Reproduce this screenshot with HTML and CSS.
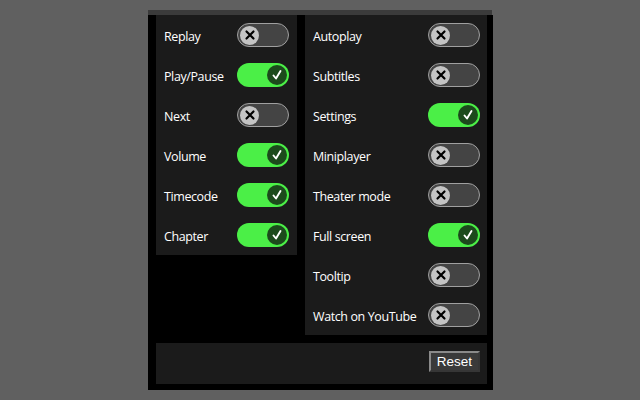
FILE: index.html
```html
<!DOCTYPE html>
<html>
<head>
<meta charset="utf-8">
<link rel="stylesheet" href="styles.css">
</head>
<body>
<div class="frame">
  <div class="box">
    <div class="cols">
      <div class="panel panel-left">
        <div class="row"><span class="label">Replay</span><span class="tog off"><span class="knob"><svg viewBox="0 0 18 18"><path d="M5.5 5.5 L12.5 12.5 M12.5 5.5 L5.5 12.5"/></svg></span></span></div>
        <div class="row"><span class="label">Play/Pause</span><span class="tog on"><span class="knob"><svg viewBox="0 0 18 18"><path d="M5.5 9.5 L8 12.5 L12.5 5"/></svg></span></span></div>
        <div class="row"><span class="label">Next</span><span class="tog off"><span class="knob"><svg viewBox="0 0 18 18"><path d="M5.5 5.5 L12.5 12.5 M12.5 5.5 L5.5 12.5"/></svg></span></span></div>
        <div class="row"><span class="label">Volume</span><span class="tog on"><span class="knob"><svg viewBox="0 0 18 18"><path d="M5.5 9.5 L8 12.5 L12.5 5"/></svg></span></span></div>
        <div class="row"><span class="label">Timecode</span><span class="tog on"><span class="knob"><svg viewBox="0 0 18 18"><path d="M5.5 9.5 L8 12.5 L12.5 5"/></svg></span></span></div>
        <div class="row"><span class="label">Chapter</span><span class="tog on"><span class="knob"><svg viewBox="0 0 18 18"><path d="M5.5 9.5 L8 12.5 L12.5 5"/></svg></span></span></div>
      </div>
      <div class="panel panel-right">
        <div class="row"><span class="label">Autoplay</span><span class="tog off"><span class="knob"><svg viewBox="0 0 18 18"><path d="M5.5 5.5 L12.5 12.5 M12.5 5.5 L5.5 12.5"/></svg></span></span></div>
        <div class="row"><span class="label">Subtitles</span><span class="tog off"><span class="knob"><svg viewBox="0 0 18 18"><path d="M5.5 5.5 L12.5 12.5 M12.5 5.5 L5.5 12.5"/></svg></span></span></div>
        <div class="row"><span class="label">Settings</span><span class="tog on"><span class="knob"><svg viewBox="0 0 18 18"><path d="M5.5 9.5 L8 12.5 L12.5 5"/></svg></span></span></div>
        <div class="row"><span class="label">Miniplayer</span><span class="tog off"><span class="knob"><svg viewBox="0 0 18 18"><path d="M5.5 5.5 L12.5 12.5 M12.5 5.5 L5.5 12.5"/></svg></span></span></div>
        <div class="row"><span class="label">Theater mode</span><span class="tog off"><span class="knob"><svg viewBox="0 0 18 18"><path d="M5.5 5.5 L12.5 12.5 M12.5 5.5 L5.5 12.5"/></svg></span></span></div>
        <div class="row"><span class="label">Full screen</span><span class="tog on"><span class="knob"><svg viewBox="0 0 18 18"><path d="M5.5 9.5 L8 12.5 L12.5 5"/></svg></span></span></div>
        <div class="row"><span class="label">Tooltip</span><span class="tog off"><span class="knob"><svg viewBox="0 0 18 18"><path d="M5.5 5.5 L12.5 12.5 M12.5 5.5 L5.5 12.5"/></svg></span></span></div>
        <div class="row"><span class="label">Watch on YouTube</span><span class="tog off"><span class="knob"><svg viewBox="0 0 18 18"><path d="M5.5 5.5 L12.5 12.5 M12.5 5.5 L5.5 12.5"/></svg></span></span></div>
      </div>
    </div>
    <div class="footer">
      <button class="reset">Reset</button>
    </div>
  </div>
</div>
</body>
</html>
```
FILE: styles.css
```css
html, body {
  margin: 0;
  padding: 0;
  background: #606060;
  height: 400px;
  overflow: hidden;
}
.frame {
  margin: 10px 0 0 148px;
  width: 344px;
  border-top: 5px solid #3b3b3b;
}
.box {
  width: 334px;
  background: #000;
  padding: 0 3px 6px 8px;
  height: 369px;
  display: flex;
  flex-direction: column;
}
.cols {
  display: flex;
  align-items: flex-start;
  gap: 8px;
}
.panel {
  background: #1b1b1b;
  display: flex;
  flex-direction: column;
}
.panel-left { width: 141px; }
.panel-right { width: 182px; }
.row {
  height: 40px;
  display: flex;
  align-items: center;
  justify-content: space-between;
  padding: 0 8px;
  box-sizing: border-box;
}
.panel-right .row { padding-right: 7px; }
.label {
  color: #ffffff;
  font-family: "Open Sans", "Noto Sans", sans-serif;
  font-size: 12.5px;
  letter-spacing: -0.4px;
  padding-top: 2px;
}
.tog {
  width: 52px;
  height: 24px;
  box-sizing: border-box;
  border-radius: 12px;
  display: flex;
  align-items: center;
  padding: 0 2px;
}
.tog.off {
  background: #444444;
  border: 1.5px solid #a0a0a0;
  justify-content: flex-start;
}
.tog.on {
  background: #4bef47;
  justify-content: flex-end;
}
.knob {
  width: 19px;
  height: 19px;
  border-radius: 50%;
  display: flex;
  align-items: center;
  justify-content: center;
}
.tog.off .knob { background: #c4c4c4; }
.tog.on .knob { background: #1c4a1c; width: 20px; height: 20px; }
.knob svg {
  width: 18px;
  height: 18px;
  fill: none;
  stroke-linecap: round;
  stroke-linejoin: round;
}
.tog.off .knob svg path { stroke: #000; stroke-width: 2.2; }
.tog.on .knob svg path { stroke: #fff; stroke-width: 1.9; }
.footer {
  margin-top: 8px;
  width: 331px;
  height: 41px;
  background: #1b1b1b;
  box-sizing: border-box;
  padding: 8px 7px 0 0;
  display: flex;
  justify-content: flex-end;
  align-items: flex-start;
}
.reset {
  width: 51px;
  height: 21px;
  margin: 0;
  padding: 0;
  background: #3a3a3a;
  color: #ffffff;
  border: 2px outset #8a8a8a;
  font-family: "Liberation Sans", Arial, sans-serif;
  font-size: 13.5px;
  line-height: 15px;
}
```
